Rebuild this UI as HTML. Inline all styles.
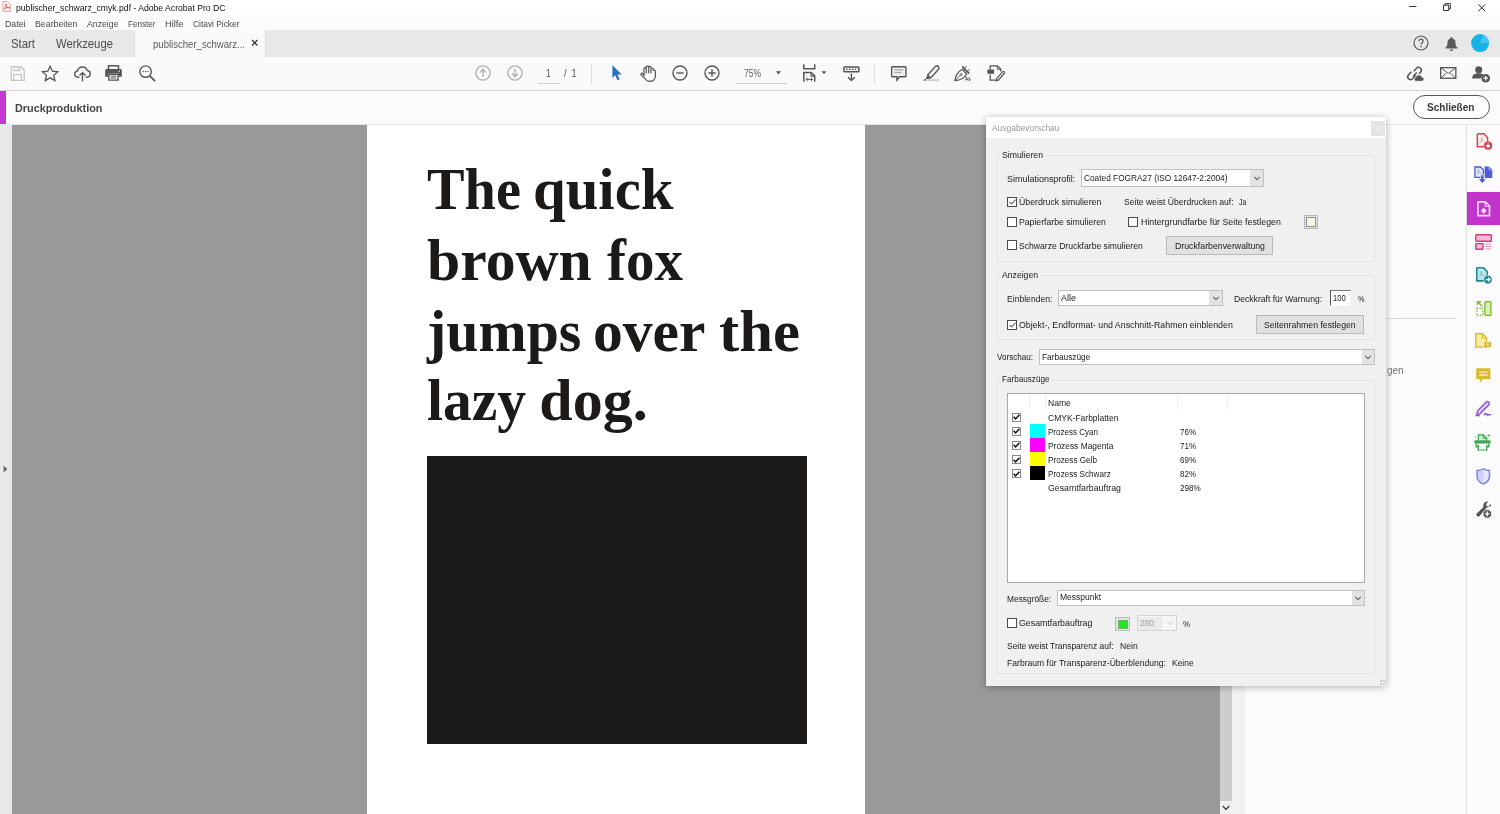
<!DOCTYPE html>
<html>
<head>
<meta charset="utf-8">
<title>publischer_schwarz_cmyk.pdf - Adobe Acrobat Pro DC</title>
<style>
*{box-sizing:border-box;margin:0;padding:0}
html,body{width:1500px;height:814px;overflow:hidden;background:#fff;font-family:"Liberation Sans",sans-serif;}
#root{position:relative;width:1500px;height:814px;overflow:hidden;background:#fff}
.a{position:absolute}
#txt{position:absolute;left:0;top:0;width:1500px;height:814px;will-change:transform}
#hd{position:absolute;left:0;top:0;width:1500px;height:814px;will-change:transform}
.t{position:absolute;white-space:pre;line-height:1;transform-origin:left center;font-family:"Liberation Sans",sans-serif}
svg{position:absolute;overflow:visible}
.hl{position:absolute;font-family:"Liberation Serif",serif;font-weight:bold;color:#1b1a18;white-space:pre;line-height:1;font-size:60px;transform-origin:left top}
.cb{position:absolute;width:10px;height:10px;border:1px solid #4c4c4c;background:#fff}
.lcb{position:absolute;width:9px;height:9px;border:1px solid #8a8a8a;background:#fff}
.sel{position:absolute;background:#fff;border:1px solid #c0c0c0}
.arr{position:absolute;background:#e3e3e3;border-left:0}
.btn{position:absolute;background:#e1e1e1;border:1px solid #bababa}
.grp{position:absolute;border:1px solid #e5e5e5}
.lbl{position:absolute;background:#f0f0f0}
</style>
</head>
<body>
<div id="root">
<!-- chrome -->
<div class="a" style="left:0;top:0;width:1500px;height:15px;background:#ffffff"></div>
<div class="a" style="left:0;top:15px;width:1500px;height:15px;background:#fbfbfb"></div>
<div class="a" style="left:0;top:30px;width:1500px;height:27px;background:#e8e8e8"></div>
<div class="a" style="left:134px;top:30px;width:132px;height:27px;background:#fafafa;border-left:1px solid #dedede;border-right:1px solid #dedede"></div>
<div class="a" style="left:0;top:57px;width:1500px;height:33px;background:#fafafa"></div>
<div class="a" style="left:0;top:90px;width:1500px;height:1px;background:#d2d2d2"></div>
<div class="a" style="left:0;top:91px;width:1500px;height:33px;background:#fbfbfb"></div>
<div class="a" style="left:0;top:91px;width:6px;height:33px;background:#c636d0"></div>
<div class="a" style="left:0;top:124px;width:1500px;height:1px;background:#e4e4e4"></div>
<!-- doc area -->
<div class="a" style="left:0;top:124px;width:1500px;height:1px;background:#e6e6e6"></div>
<div class="a" style="left:0;top:125px;width:12px;height:689px;background:#e9e9e9"></div>
<div class="a" style="left:12px;top:124.500px;width:1208px;height:690px;background:#999999"></div>
<div class="a" style="left:367px;top:125px;width:498px;height:689px;background:#ffffff"></div>
<div class="a" style="left:427px;top:456px;width:379.500px;height:287.500px;background:#1a1917"></div>
<div class="a" style="left:1220px;top:125px;width:12px;height:689px;background:#cdcdcd"></div>
<div class="a" style="left:1220px;top:801px;width:12px;height:13px;background:#f0f0f0"></div>
<div class="a" style="left:1232px;top:125px;width:13px;height:689px;background:#f1f1f1"></div>
<div class="a" style="left:1245px;top:125px;width:221px;height:689px;background:#fbfbfb"></div>
<div class="a" style="left:1466px;top:125px;width:1px;height:689px;background:#dedede"></div>
<div class="a" style="left:1467px;top:125px;width:33px;height:689px;background:#fbfbfb"></div>
<div class="a" style="left:1467px;top:192px;width:33px;height:32.500px;background:#c334cc"></div>
<div class="a" style="left:1386px;top:318px;width:70px;height:1px;background:#dcdcdc"></div>
<!-- left panel arrow -->
<svg style="left:3.400px;top:465px" width="5" height="8" viewBox="0 0 5 8"><path d="M0.5 0.5L4.5 4L0.5 7.5z" fill="#6a6a6a"/></svg>
<!-- scrollbar down arrow -->
<svg style="left:1222px;top:804.500px" width="8" height="6" viewBox="0 0 8 6"><path d="M0.8 1L4 4.4L7.2 1" fill="none" stroke="#444" stroke-width="1.4"/></svg>
<!-- headline -->
<div id="hd">
<div class="hl" id="w1" style="left:427.06px;top:159.400px;transform:scaleX(0.9388)">The</div>
<div class="hl" id="w2" style="left:532.74px;top:159.400px;transform:scaleX(0.9794)">quick</div>
<div class="hl" id="w3" style="left:426.5px;top:230.4px;transform:scaleX(0.9951)">brown</div>
<div class="hl" id="w4" style="left:606.7px;top:230.4px;transform:scaleX(0.95)">fox</div>
<div class="hl" id="w5" style="left:426.7px;top:300.5px;transform:scaleX(0.9642)">jumps</div>
<div class="hl" id="w6" style="left:592.71px;top:300.5px;transform:scaleX(0.9936)">over</div>
<div class="hl" id="w7" style="left:718.99px;top:300.5px;transform:scaleX(1.013)">the</div>
<div class="hl" id="w8" style="left:426.54px;top:370.4px;transform:scaleX(0.9588)">lazy</div>
<div class="hl" id="w9" style="left:539.3px;top:370.4px;transform:scaleX(1.0)">dog.</div>
</div>
<!-- toolbar small bits -->
<div class="a" style="left:538px;top:83px;width:22px;height:1px;background:#cfcfcf"></div>
<div class="a" style="left:591px;top:64px;width:1px;height:20px;background:#dedede"></div>
<div class="a" style="left:736px;top:83px;width:51px;height:1px;background:#cfcfcf"></div>
<div class="a" style="left:874px;top:64px;width:1px;height:20px;background:#dedede"></div>
<div class="a" style="left:1413px;top:95px;width:77px;height:24px;border:1.300px solid #585858;border-radius:12px;background:#fdfdfd"></div>
<!-- DIALOG -->
<div class="a" style="left:986px;top:117px;width:400px;height:569px;background:#f0f0f0;box-shadow:0 1px 7px rgba(0,0,0,.30)"></div>
<div class="a" style="left:986px;top:117px;width:400px;height:21px;background:#ffffff"></div>
<div class="a" style="left:1371px;top:121px;width:14px;height:15px;background:#e5e5e5"></div>
<div class="t" style="left:1375.5px;top:124px;font-size:9px;color:#f4f4f4">×</div>
<!-- groups -->
<div class="grp" style="left:997px;top:155px;width:378px;height:107px"></div>
<div class="lbl" style="left:1000px;top:149px;width:45px;height:11px"></div>
<div class="grp" style="left:997px;top:275px;width:378px;height:65px"></div>
<div class="lbl" style="left:1000px;top:269px;width:40px;height:11px"></div>
<div class="grp" style="left:997px;top:380px;width:378px;height:294px"></div>
<div class="lbl" style="left:1000px;top:374px;width:52px;height:11px"></div>
<!-- row 1 select -->
<div class="sel" style="left:1081px;top:169px;width:183px;height:18px"></div>
<div class="arr" style="left:1250px;top:170px;width:13px;height:16px"></div>
<svg style="left:1253px;top:176px" width="8" height="5" viewBox="0 0 8 5"><path d="M1.200 0.900L4 3.700L6.800 0.900" fill="none" stroke="#6a6a6a" stroke-width="1.200"/></svg>
<!-- checkboxes -->
<div class="cb" style="left:1007px;top:197px"></div>
<svg style="left:1008.5px;top:199px" width="7" height="6" viewBox="0 0 7 6"><path d="M0.5 3L2.6 5.1L6.6 0.6" fill="none" stroke="#222" stroke-width="1"/></svg>
<div class="cb" style="left:1007px;top:217px"></div>
<div class="cb" style="left:1128px;top:217px"></div>
<div class="cb" style="left:1007px;top:240px"></div>
<div class="cb" style="left:1007px;top:319.5px"></div>
<svg style="left:1008.5px;top:321.5px" width="7" height="6" viewBox="0 0 7 6"><path d="M0.5 3L2.6 5.1L6.6 0.6" fill="none" stroke="#222" stroke-width="1"/></svg>
<div class="cb" style="left:1007px;top:618px"></div>
<!-- colour swatch -->
<div class="a" style="left:1304px;top:215px;width:14px;height:14px;background:#e3e3e3;border:1px solid #b9b9b9"></div>
<div class="a" style="left:1306px;top:217px;width:10px;height:10px;background:#f6f9e3;border:1px solid #8f8f8f"></div>
<!-- buttons -->
<div class="btn" style="left:1166px;top:236px;width:107px;height:19px"></div>
<div class="btn" style="left:1256px;top:315px;width:108px;height:19px"></div>
<!-- Einblenden select -->
<div class="sel" style="left:1058px;top:289.5px;width:165px;height:16.5px"></div>
<div class="arr" style="left:1209px;top:290.5px;width:13px;height:14.5px"></div>
<svg style="left:1212px;top:296px" width="8" height="5" viewBox="0 0 8 5"><path d="M1.200 0.900L4 3.700L6.800 0.900" fill="none" stroke="#6a6a6a" stroke-width="1.200"/></svg>
<!-- 100 input -->
<div class="a" style="left:1330px;top:290px;width:21px;height:16px;background:#fff;border-left:1px solid #555;border-top:1px solid #777;border-right:1px solid #f8f8f8;border-bottom:1px solid #f8f8f8"></div>
<!-- Vorschau select -->
<div class="sel" style="left:1039px;top:348.5px;width:336px;height:16.5px"></div>
<div class="arr" style="left:1361.5px;top:349.5px;width:12.5px;height:14.5px"></div>
<svg style="left:1364px;top:355px" width="8" height="5" viewBox="0 0 8 5"><path d="M1.200 0.900L4 3.700L6.800 0.900" fill="none" stroke="#6a6a6a" stroke-width="1.200"/></svg>
<!-- list box -->
<div class="a" style="left:1007px;top:393px;width:358px;height:190px;background:#fff;border:1px solid #a9a9a9"></div>
<div class="a" style="left:1029px;top:394px;width:1px;height:16px;background:#ededed"></div>
<div class="a" style="left:1044.5px;top:394px;width:1px;height:16px;background:#ededed"></div>
<div class="a" style="left:1176.5px;top:394px;width:1px;height:16px;background:#ededed"></div>
<div class="a" style="left:1227px;top:394px;width:1px;height:16px;background:#ededed"></div>
<!-- swatches -->
<div class="a" style="left:1030px;top:424px;width:14.5px;height:14px;background:#00ffff"></div>
<div class="a" style="left:1030px;top:437.7px;width:14.5px;height:14px;background:#ff00ff"></div>
<div class="a" style="left:1030px;top:451.7px;width:14.5px;height:14px;background:#ffff00"></div>
<div class="a" style="left:1030px;top:465.7px;width:14.5px;height:14.2px;background:#000000"></div>
<div class="lcb" style="left:1011.5px;top:412.7px"></div>
<svg style="left:1012.6px;top:414.3px" width="7" height="6" viewBox="0 0 7 6"><path d="M0.6 2.8L2.6 4.9L6.4 0.7" fill="none" stroke="#111" stroke-width="1.5"/></svg>
<div class="lcb" style="left:1011.5px;top:426.8px"></div>
<svg style="left:1012.6px;top:428.4px" width="7" height="6" viewBox="0 0 7 6"><path d="M0.6 2.8L2.6 4.9L6.4 0.7" fill="none" stroke="#111" stroke-width="1.5"/></svg>
<div class="lcb" style="left:1011.5px;top:440.8px"></div>
<svg style="left:1012.6px;top:442.4px" width="7" height="6" viewBox="0 0 7 6"><path d="M0.6 2.8L2.6 4.9L6.4 0.7" fill="none" stroke="#111" stroke-width="1.5"/></svg>
<div class="lcb" style="left:1011.5px;top:454.9px"></div>
<svg style="left:1012.6px;top:456.5px" width="7" height="6" viewBox="0 0 7 6"><path d="M0.6 2.8L2.6 4.9L6.4 0.7" fill="none" stroke="#111" stroke-width="1.5"/></svg>
<div class="lcb" style="left:1011.5px;top:469.0px"></div>
<svg style="left:1012.6px;top:470.6px" width="7" height="6" viewBox="0 0 7 6"><path d="M0.6 2.8L2.6 4.9L6.4 0.7" fill="none" stroke="#111" stroke-width="1.5"/></svg>
<!-- Messgroesse select -->
<div class="sel" style="left:1057px;top:590px;width:308px;height:16px"></div>
<div class="arr" style="left:1351.500px;top:591px;width:12.500px;height:14px"></div>
<svg style="left:1354px;top:596px" width="8" height="5" viewBox="0 0 8 5"><path d="M1.200 0.900L4 3.700L6.800 0.900" fill="none" stroke="#6a6a6a" stroke-width="1.200"/></svg>
<!-- green swatch -->
<div class="a" style="left:1115px;top:617px;width:15px;height:14px;background:#e3e3e3;border:1px solid #bdbdbd"></div>
<div class="a" style="left:1117.500px;top:619.500px;width:10px;height:9px;background:#1fe61f;border:1px solid #6fb56f"></div>
<!-- 280 combo (disabled) -->
<div class="a" style="left:1136.5px;top:615px;width:40px;height:16px;background:#f6f6f6;border:1px solid #d4d4d4"></div>
<div class="a" style="left:1138px;top:616.5px;width:24px;height:13px;background:#eaeaea"></div>
<svg style="left:1166.5px;top:621px" width="7" height="5" viewBox="0 0 7 5"><path d="M0.6 0.7L3.5 3.7L6.4 0.7" fill="none" stroke="#c4c4c4" stroke-width="1"/></svg>
<!-- resize grip -->
<div class="a" style="left:1380px;top:680px;width:2px;height:2px;background:#c9c9c9"></div>
<div class="a" style="left:1383px;top:680px;width:2px;height:2px;background:#c9c9c9"></div>
<div class="a" style="left:1380px;top:683px;width:2px;height:2px;background:#c9c9c9"></div>
<div class="a" style="left:1383px;top:683px;width:2px;height:2px;background:#c9c9c9"></div>
<!-- ICONS -->
<!-- pdf icon in title -->
<svg style="left:2px;top:1.200px" width="9" height="11" viewBox="0 0 9 11"><path d="M0.900 0.500h4.800l2.600 2.600v7.200h-7.400z" fill="#fdf3f3" stroke="#e6a3a1" stroke-width="1"/><path d="M1.900 7.700c1.500-.8 2.500-2.700 2.500-4.400c0-.8-.8-.8-.8 0c0 1.600 1.500 3.400 3.400 3.700c.7.100.7-.6 0-.6c-1.600 0-3.500.4-5.100 1.300z" fill="none" stroke="#d84b46" stroke-width=".75"/></svg>
<!-- window controls -->
<svg style="left:1409px;top:6px" width="8" height="1.4" viewBox="0 0 8 1.4"><rect width="7.4" height="1" fill="#333"/></svg>
<svg style="left:1443px;top:3px" width="8" height="8" viewBox="0 0 8 8"><path d="M0.5 2.2h5.2v5.300h-5.200z" fill="none" stroke="#333" stroke-width="1"/><path d="M2 2V.6h5.300v5.400H5.900" fill="none" stroke="#333" stroke-width="1"/></svg>
<svg style="left:1478px;top:3.5px" width="8" height="8" viewBox="0 0 8 8"><path d="M0.4 0.4L7.2 7.200M7.200 .4L.4 7.200" stroke="#222" stroke-width="1"/></svg>
<!-- tab bar right: help, bell, avatar -->
<svg style="left:1412.500px;top:35.200px" width="16" height="16" viewBox="0 0 16 16"><circle cx="8" cy="8" r="7" fill="none" stroke="#5a5a5a" stroke-width="1.200"/><path d="M5.900 6.300c0-1.300.9-2.100 2.100-2.100s2.100.8 2.100 1.900c0 1.500-2.000 1.600-2.000 3.300" fill="none" stroke="#5a5a5a" stroke-width="1.300"/><circle cx="8.100" cy="11.500" r=".85" fill="#5a5a5a"/></svg>
<svg style="left:1444.500px;top:36.500px" width="13" height="15" viewBox="0 0 13 15"><path d="M6.500 0.300c.8 0 1.200.5 1.200 1.200c2 .6 2.800 2.200 2.800 4.300c0 2.500.600 3.800 2 4.800v.9h-12v-.9c1.400-1 2-2.300 2-4.800c0-2.100.8-3.700 2.800-4.300c0-.7.400-1.200 1.200-1.200z" fill="#5a5a5a"/><path d="M4.900 12.400h3.200c0 1-.7 1.700-1.600 1.700s-1.600-.7-1.600-1.700z" fill="#5a5a5a"/></svg>
<svg style="left:1471.400px;top:34.400px" width="18.200" height="18.200" viewBox="0 0 18.200 18.200"><circle cx="9.100" cy="9.100" r="9" fill="#14b4e6"/><path d="M9.100 9.100L12.800 0.900A9 9 0 0 1 18.100 9.100z" fill="#4cc6ec"/></svg>
<!-- LEFT TOOLBAR -->
<!-- save (disabled) -->
<svg style="left:10px;top:66px" width="15" height="15" viewBox="0 0 15 15"><path d="M1.200 0.700h9.600l3.400 3.400v10.200h-13z" fill="none" stroke="#c6c6c6" stroke-width="1.300"/><path d="M4 .9v3.800h5.800v-3.800M3.600 14.100v-5.400h7.800v5.400" fill="none" stroke="#c6c6c6" stroke-width="1.200"/><path d="M7.800 1.500v2.200" stroke="#c6c6c6" stroke-width="1.200"/></svg>
<!-- star -->
<svg style="left:40.800px;top:65.200px" width="18.200" height="16.200" viewBox="0 0 19 17"><path d="M9.500 1.300l2.400 5.200l5.700 .6l-4.300 3.800l1.200 5.500l-5-2.900l-5 2.900l1.200-5.500l-4.300-3.800l5.700-.6z" fill="none" stroke="#555" stroke-width="1.350" stroke-linejoin="miter"/></svg>
<!-- cloud upload -->
<svg style="left:73.500px;top:65.500px" width="17" height="16" viewBox="0 0 17 16"><path d="M5.300 11.200h-1.300c-1.900 0-3.300-1.400-3.300-3.100c0-1.600 1.200-2.900 2.800-3.100c.5-2.300 2.400-4 4.900-4c2.300 0 4.200 1.400 4.800 3.500c1.800.2 3.100 1.600 3.100 3.300c0 1.900-1.500 3.400-3.400 3.400h-1.200" fill="none" stroke="#555" stroke-width="1.350"/><path d="M8.500 15.300v-8.300M5.500 9.600l3-3l3 3" fill="none" stroke="#555" stroke-width="1.350"/></svg>
<!-- printer -->
<svg style="left:105.400px;top:65px" width="17" height="16" viewBox="0 0 17 16"><path d="M3.500 4.200v-3.400h10v3.400" fill="none" stroke="#555" stroke-width="1.500"/><path d="M1.800 4h13.400c.9 0 1.600.7 1.600 1.600v6.200h-3v-3.200h-10.600v3.200h-3v-6.200c0-.9.700-1.600 1.600-1.600z" fill="#555"/><path d="M3.900 9.200h9.200v5.900h-9.200z" fill="none" stroke="#555" stroke-width="1.400"/><path d="M5.800 11.200h5.400M5.800 13h5.400" stroke="#555" stroke-width="1"/><circle cx="14.200" cy="6.200" r=".7" fill="#fafafa"/></svg>
<!-- search -->
<svg style="left:138.500px;top:65px" width="17" height="17" viewBox="0 0 17 17"><circle cx="6.600" cy="6.600" r="5.700" fill="none" stroke="#555" stroke-width="1.400"/><path d="M10.800 10.800l5.300 5.300" stroke="#555" stroke-width="1.800"/><circle cx="4.200" cy="6.600" r=".75" fill="#555"/><circle cx="6.600" cy="6.600" r=".75" fill="#555"/><circle cx="9" cy="6.600" r=".75" fill="#555"/></svg>
<!-- CENTER TOOLBAR -->
<svg style="left:474.500px;top:64.7px" width="16" height="16" viewBox="0 0 16 16"><circle cx="8" cy="8" r="7.100" fill="none" stroke="#b0b0b0" stroke-width="1.400"/><path d="M8 12v-7.500M4.900 7.400l3.100-3.100l3.100 3.100" fill="none" stroke="#b0b0b0" stroke-width="1.400"/></svg>
<svg style="left:506.700px;top:64.7px" width="16" height="16" viewBox="0 0 16 16"><circle cx="8" cy="8" r="7.100" fill="none" stroke="#b0b0b0" stroke-width="1.400"/><path d="M8 4v7.500M4.900 8.600l3.100 3.100l3.100-3.100" fill="none" stroke="#b0b0b0" stroke-width="1.400"/></svg>
<!-- pointer -->
<svg style="left:611.500px;top:64.7px" width="10" height="16" viewBox="0 0 10 16"><path d="M0.400 0.300l9.300 9.100h-4.300l2.300 4.900l-2.200 1l-2.300-5l-2.800 2.700z" fill="#2a6fc7"/></svg>
<!-- hand -->
<svg style="left:640px;top:64.600px" width="16" height="17" viewBox="0 0 16 17"><path d="M4 10.600V3.700c0-1.500 2.300-1.500 2.300 0V8M6.300 7.800V2c0-1.500 2.400-1.500 2.400 0V7.800M8.700 7.800V2.400c0-1.500 2.300-1.500 2.300 0V8M11 8V4.100c0-1.500 2.300-1.500 2.300 0v1.200c1.200-.5 2.100.2 2.100 1.400V10.800c0 3.400-2.200 5.500-5.600 5.500c-2.300 0-3.700-.9-4.900-2.800L1 9.900c-.7-1.200.9-2.300 1.800-1.200L4 10.600" fill="none" stroke="#555" stroke-width="1.200" stroke-linejoin="round" stroke-linecap="round"/></svg>
<!-- minus / plus -->
<svg style="left:672px;top:64.7px" width="16" height="16" viewBox="0 0 16 16"><circle cx="8" cy="8" r="7" fill="none" stroke="#555" stroke-width="1.350"/><path d="M4.300 8h7.400" stroke="#555" stroke-width="1.400"/></svg>
<svg style="left:704.200px;top:64.7px" width="16" height="16" viewBox="0 0 16 16"><circle cx="8" cy="8" r="7" fill="none" stroke="#555" stroke-width="1.350"/><path d="M4.300 8h7.400M8 4.300v7.400" stroke="#555" stroke-width="1.400"/></svg>
<!-- zoom dropdown arrow -->
<svg style="left:776px;top:71.2px" width="5" height="4" viewBox="0 0 5 4"><path d="M0 0.300h5l-2.500 3.300z" fill="#555"/></svg>
<!-- fit page -->
<svg style="left:803px;top:63.800px" width="24" height="18" viewBox="0 0 24 18"><path d="M0.800 0.300v4.500h10.900v-4.500" fill="none" stroke="#555" stroke-width="1.500"/><path d="M0.800 17.800v-9.300h7.400l3.500 3.400v5.900" fill="none" stroke="#555" stroke-width="1.500"/><path d="M8 8.700v3.400h3.500" fill="none" stroke="#555" stroke-width="1.100"/><path d="M3 15.400h6.500M4.600 13.800l-1.700 1.600l1.700 1.600M7.900 13.800l1.700 1.600l-1.700 1.600" fill="none" stroke="#555" stroke-width="1"/><path d="M18.600 7.200h4.800l-2.400 3z" fill="#555"/></svg>
<!-- scroll/keyboard icon -->
<svg style="left:843px;top:66px" width="17" height="16" viewBox="0 0 17 16"><rect x="0.900" y="0.900" width="15" height="4.800" rx=".8" fill="#f2f2f2" stroke="#555" stroke-width="1.500"/><rect x="3" y="2.700" width="1.500" height="1.300" fill="#555"/><rect x="5.900" y="2.700" width="1.500" height="1.300" fill="#555"/><rect x="8.800" y="2.700" width="1.500" height="1.300" fill="#555"/><rect x="11.700" y="2.700" width="1.500" height="1.300" fill="#555"/><path d="M8.400 7.600v6.700M5 11.200l3.400 3.400l3.400-3.400" fill="none" stroke="#555" stroke-width="1.400"/></svg>
<!-- comment -->
<svg style="left:891px;top:65.800px" width="16" height="15" viewBox="0 0 16 15"><path d="M1.500 0.700h12.600c.5 0 .9.400 .9.900v8.200c0 .5-.4.900-.9.900h-5.500l-2.700 3.300v-3.300h-4.400c-.5 0-.9-.4-.9-.900v-8.200c0-.5.400-.9.900-.9z" fill="#ececec" stroke="#555" stroke-width="1.350"/><path d="M3.500 3.800h8.600M3.500 6.400h6.800" stroke="#9a9a9a" stroke-width="1"/></svg>
<!-- highlighter -->
<svg style="left:922px;top:65px" width="18" height="17" viewBox="0 0 18 17"><path d="M5.600 10l7.600-8.400c.9-1 2.200-1 3.100-.2s1 2.100.1 3.100l-7.600 8.400z" fill="#f0f0f0" stroke="#555" stroke-width="1.300"/><path d="M5.300 10.300l3.200 2.900l-2.400 1.100l-2.400-.6z" fill="#555"/><path d="M0.600 15.600l2.800-1.800l1.600 1.600z" fill="#555"/><rect x="5.500" y="14.200" width="11.800" height="2" fill="#d0d0d0"/></svg>
<!-- sign pen -->
<svg style="left:954px;top:64.800px" width="18" height="17" viewBox="0 0 18 17"><path d="M1 15.600C1.400 11 3.600 7 8.400 4.300L12.700 9.200C10.200 13.600 6 15.200 1 15.600z" fill="none" stroke="#555" stroke-width="1.300" stroke-linejoin="round"/><path d="M1.300 15.300l5-5" stroke="#555" stroke-width="1"/><circle cx="7.100" cy="9.600" r="1.100" fill="none" stroke="#555" stroke-width=".9"/><path d="M8.200 1.400l7 7.200" stroke="#555" stroke-width="1.600"/><path d="M10.300 3.600l2.300-2.600M13 6.500l2.500-2.200" stroke="#555" stroke-width="1"/><path d="M11.300 15.500l1.300-3.300l1.300 3.300M11.800 14.400h1.600M15 12.200v3.300c1.800.2 1.800-2.200 0-2" fill="none" stroke="#555" stroke-width=".8"/></svg>
<!-- redact / fill-sign -->
<svg style="left:986.500px;top:65px" width="18" height="17" viewBox="0 0 18 17"><path d="M3.200 4.300v-3.400h7.300l3.200 3.100v2.600" fill="none" stroke="#555" stroke-width="1.300"/><path d="M10.200 1v3.300h3.300" fill="none" stroke="#555" stroke-width="1"/><rect x="0.400" y="4.500" width="6.700" height="4.300" fill="#555"/><path d="M3.200 9.500v5.700h5.600" fill="none" stroke="#555" stroke-width="1.300"/><path d="M9.800 13.300l5.600-6.400c.5-.5 1.200-.5 1.700-.1s.5 1.200.1 1.700l-5.600 6.400l-2.400.9z" fill="#ececec" stroke="#555" stroke-width="1.200"/></svg>
<!-- RIGHT TOOLBAR -->
<!-- link+cloud -->
<svg style="left:1407px;top:65.500px" width="19" height="16" viewBox="0 0 19 16"><path d="M6.700 5.200l2.500-2.700c1.200-1.300 3-1.400 4.200-.3s1.200 2.900.1 4.100l-1.400 1.500" fill="none" stroke="#555" stroke-width="1.500"/><path d="M9.800 6.600l-3.900 4.200" stroke="#555" stroke-width="1.500"/><path d="M8.900 9.400l-3 3.200c-1.200 1.300-3 1.400-4.200.3s-1.200-2.900-.1-4.100l2.800-3" fill="none" stroke="#555" stroke-width="1.500"/><path d="M9.300 15.300c-1.300 0-2.200-.9-2.200-2c0-1 .7-1.800 1.700-2c.3-1.500 1.600-2.500 3.100-2.500c1.400 0 2.600.9 3 2.200c1.200.1 2.100 1 2.100 2.100c0 1.200-1 2.200-2.200 2.200z" fill="#555" stroke="#fafafa" stroke-width=".8"/></svg>
<!-- mail -->
<svg style="left:1440.400px;top:67px" width="17" height="12" viewBox="0 0 17 12"><rect x="0.650" y="0.650" width="15.200" height="10.600" fill="none" stroke="#555" stroke-width="1.300"/><path d="M0.900 0.900l7.400 5.500l7.400-5.500M0.900 11l5.500-5M15.600 11l-5.500-5" fill="none" stroke="#555" stroke-width="1"/></svg>
<!-- person + -->
<svg style="left:1471.500px;top:65.500px" width="19" height="17" viewBox="0 0 19 17"><circle cx="6.700" cy="3.700" r="3.500" fill="#555"/><path d="M0.200 12.400c0-3.400 2.400-5.200 6.500-5.200c2.300 0 4 .6 5.100 1.700c-1.700 .6-2.800 2-3.100 3.500z" fill="#555"/><circle cx="13.700" cy="12.200" r="4.300" fill="#555"/><path d="M11.400 12.200h4.600M13.700 9.900v4.600" stroke="#fafafa" stroke-width="1.300"/></svg>
<!-- RIGHT RAIL ICONS -->
<!-- 1 create pdf -->
<svg style="left:1475.500px;top:133px" width="17" height="17" viewBox="0 0 17 17"><path d="M1.300 0.800h6.600l3.700 3.700v4.300M8.300 13.800h-7v-13" fill="#fbe9ea" stroke="#d9414a" stroke-width="1.400"/><path d="M3.400 10.300c1.400-.9 2.600-3 2.800-5.200c0-.8-.8-.8-.8 0c.2 1.900 1.500 3.500 3 4" fill="none" stroke="#e07f85" stroke-width=".8"/><circle cx="12.100" cy="12.700" r="4.100" fill="#d9414a"/><path d="M9.900 12.700h4.400M12.100 10.500v4.400" stroke="#fff" stroke-width="1.400"/></svg>
<!-- 2 export pdf -->
<svg style="left:1474px;top:165.500px" width="19" height="18" viewBox="0 0 19 18"><path d="M0.900 1h5.600l2.800 2.800v7.600h-8.400z" fill="#e4e6fa" stroke="#4f5bd5" stroke-width="1.300"/><path d="M2.600 8.300c1.200-.7 2.100-2.300 2.300-4c0-.7-.7-.7-.7 0c.2 1.500 1.200 2.800 2.500 3.200" fill="none" stroke="#8a92e3" stroke-width=".8"/><path d="M10.600 0.400h4.400l3.300 3.300v8.200h-7.700z" fill="#4f5bd5"/><path d="M15 0.400v3.300h3.300" fill="none" stroke="#c8ccf4" stroke-width=".8"/><path d="M6.700 8.800h3.200v4.200h2.300l-3.900 4.400l-3.900-4.400h2.300z" fill="#4f5bd5" stroke="#fbfbfb" stroke-width=".7"/></svg>
<!-- 3 print production (active) -->
<svg style="left:1476.800px;top:200.800px" width="14" height="16" viewBox="0 0 14 16"><path d="M0.900 0.900h7.400l4.200 4.200v9.600h-11.600z" fill="none" stroke="#fbdcfd" stroke-width="1.700" stroke-linejoin="round"/><path d="M8.200 1.200v4h4" fill="none" stroke="#fbdcfd" stroke-width="1.100"/><path d="M6.700 6.400l2.900 3.300l-2.900 3.300l-2.900-3.300z" fill="#fbdcfd"/></svg>
<!-- 4 rich media / layout -->
<svg style="left:1474.500px;top:233.500px" width="17" height="16" viewBox="0 0 17 16"><rect x="0.800" y="0.800" width="15.600" height="6.400" rx=".8" fill="#ffb9d9" stroke="#d03a80" stroke-width="1.400"/><rect x="0.800" y="9.600" width="7.200" height="5.700" rx=".6" fill="#ffb9d9" stroke="#d03a80" stroke-width="1.400"/><path d="M10.400 10.100h6M10.400 12.500h6M10.400 14.900h6" stroke="#e58ab4" stroke-width="1"/></svg>
<!-- 5 send pdf -->
<svg style="left:1476px;top:267px" width="17" height="17" viewBox="0 0 17 17"><path d="M0.900 0.900h6.600l3.800 3.800v4.300M7.600 13.800h-6.700v-12.900" fill="#b9e6ec" stroke="#22838d" stroke-width="1.400"/><path d="M1 1h6.400l3.800 3.800v9h-10.200z" fill="#b9e6ec" stroke="none"/><path d="M0.900 0.900h6.600l3.800 3.800v9h-10.400z" fill="none" stroke="#22838d" stroke-width="1.400"/><path d="M3 10.300c1.400-.9 2.600-3 2.800-5.200c0-.8-.8-.8-.8 0c.2 1.900 1.500 3.500 3 4" fill="none" stroke="#6fb3ba" stroke-width=".8"/><circle cx="11.900" cy="12.600" r="4.300" fill="#1b8792" stroke="#fbfbfb" stroke-width=".6"/><path d="M9.600 12.600h4M12 10.600l2 2l-2 2" fill="none" stroke="#fff" stroke-width="1.300"/></svg>
<!-- 6 organize / compare -->
<svg style="left:1475.500px;top:301px" width="16" height="16" viewBox="0 0 16 16"><rect x="8.900" y="0.800" width="6" height="13.600" rx=".6" fill="#d8f2b6" stroke="#86ba38" stroke-width="1.400"/><path d="M0.800 7.200h5.800v7.200h-5.800z" fill="none" stroke="#86ba38" stroke-width="1.300" stroke-dasharray="1.500 1.300"/><path d="M6.400 5.300l-4.800-4.300M1.300 4.300v-3.500h3.700" fill="none" stroke="#86ba38" stroke-width="1.400"/></svg>
<!-- 7 doc + comment -->
<svg style="left:1474.800px;top:333px" width="17" height="17" viewBox="0 0 17 17"><path d="M0.800 0.800h6.800l4 4v9.300h-10.800z" fill="#f6eba6" stroke="#d8bf22" stroke-width="1.400"/><path d="M7.400 1v4h4" fill="none" stroke="#d8bf22" stroke-width="1"/><path d="M8.900 8.700h7.400v5.700h-4.300l-1.700 1.800v-1.800h-1.400z" fill="#d6ba20" stroke="#fbfbfb" stroke-width=".5"/><rect x="11.300" y="10.400" width="2.600" height="2" fill="#f6eba6"/></svg>
<!-- 8 comment -->
<svg style="left:1475.800px;top:368.200px" width="15" height="15" viewBox="0 0 15 15"><path d="M1.200 0.200h12.200c.6 0 1 .4 1 1v8.900c0 .6-.4 1-1 1h-6.300l-3 3.600v-3.600h-2.900c-.6 0-1-.4-1-1v-8.900c0-.6.4-1 1-1z" fill="#d9ba2b"/><path d="M3.200 4.100h8.400M3.200 7h8.400" stroke="#fbf0bd" stroke-width="1.300"/></svg>
<!-- 9 fill & sign pen -->
<svg style="left:1474.500px;top:401px" width="18" height="16" viewBox="0 0 18 16"><path d="M1.600 13.700l1.200-4.200l8.200-8.200c.8-.8 2-.8 2.800 0s.8 2 0 2.800l-8.200 8.200z" fill="#e0cbf7" stroke="#8d55d2" stroke-width="1.400" stroke-linejoin="round"/><path d="M0.600 14.600h4.200" stroke="#8d55d2" stroke-width="1.400"/><path d="M9.200 14.400c.6-2.500 1.600-2.600 1.800-.4c.6-1.500 1.400-1.500 1.700 0c.5-.9 1.200-.9 1.500 0c.5-.4 1.200-.5 1.900-.4" fill="none" stroke="#8d55d2" stroke-width="1.300"/></svg>
<!-- 10 print production green -->
<svg style="left:1474.300px;top:434px" width="17" height="17" viewBox="0 0 17 17"><path d="M4.400 6.400v-5.500h4.900l3.300 3.300v2.200" fill="#d5f3db" stroke="#3fa856" stroke-width="1.400"/><path d="M9.100 1.100v3.300h3.300" fill="none" stroke="#3fa856" stroke-width="1"/><rect x="0.400" y="6.300" width="16.200" height="3.300" rx=".7" fill="#3fa856"/><path d="M2.300 9.500v3.300h2M14.700 9.500v3.300h-2" fill="none" stroke="#3fa856" stroke-width="1.500"/><path d="M4.300 11v5.100h8.400v-5.100" fill="none" stroke="#3fa856" stroke-width="1.400"/><path d="M5.600 16.100h5.800" stroke="#d5f3db" stroke-width="1.400" stroke-dasharray="1 1.400"/><path d="M14.900 0.200v2.600M13.600 1.500h2.600" stroke="#3fa856" stroke-width=".8"/><path d="M1.500 2.300v1.600M.7 3.100h1.600" stroke="#7fca90" stroke-width=".6"/></svg>
<!-- 11 shield -->
<svg style="left:1476px;top:467.700px" width="15" height="17" viewBox="0 0 15 17"><path d="M7.300 0.900c1.800 1.200 3.800 1.700 6.200 1.700v5.400c0 3.900-2.300 6.500-6.200 7.900c-3.900-1.400-6.200-4-6.200-7.900v-5.400c2.400 0 4.400-.5 6.200-1.700z" fill="#e4e6fb" stroke="#7a80d9" stroke-width="1.500" stroke-linejoin="round"/><path d="M7.300 1.600v13.800c-3.400-1.300-5.500-3.700-5.500-7.300v-4.900c2.100 0 3.900-.5 5.500-1.600z" fill="#cfd2f6"/></svg>
<!-- 12 wrench + -->
<svg style="left:1475.200px;top:501px" width="17" height="17" viewBox="0 0 17 17"><path d="M1.200 13.100l7.300-7.100c-.6-1.800-.1-3.500 1.200-4.600c1.100-.9 2.500-1.200 3.800-.8l-2.600 2.700l.5 2l2 .5l2.200-2.300" fill="none" stroke="#555" stroke-width="0"/><path d="M2 14.900c-.8-.8-.8-1.900 0-2.600l6.500-6.300c-.5-1.600-.1-3.300 1.200-4.500c1.100-1 2.600-1.300 3.900-.9l-2.500 2.500l.4 1.900l1.900.4l2.500-2.500c.2.700.2 1.600 0 2.200l-4 1.500l-7.300 8.300c-.7.800-1.800.8-2.600 0z" fill="#555"/><circle cx="12.300" cy="12.900" r="4.300" fill="#555" stroke="#fbfbfb" stroke-width=".7"/><path d="M10 12.900h4.600M12.300 10.600v4.600" stroke="#fbfbfb" stroke-width="1.400"/></svg>

<!-- texts -->
<div id="txt">
<div class="t" style="left:15.5px;top:3.7px;font-size:9.0px;color:#111;transform:scaleX(0.9583)">publischer_schwarz_cmyk.pdf - Adobe Acrobat Pro DC</div>
<div class="t" style="left:4.5px;top:20.0px;font-size:8.8px;color:#4a4a4a;transform:scaleX(0.9977)">Datei</div>
<div class="t" style="left:34.5px;top:20.0px;font-size:8.8px;color:#4a4a4a;transform:scaleX(0.9985)">Bearbeiten</div>
<div class="t" style="left:86.5px;top:20.0px;font-size:8.8px;color:#4a4a4a;transform:scaleX(0.9907)">Anzeige</div>
<div class="t" style="left:127.5px;top:20.0px;font-size:8.8px;color:#4a4a4a;transform:scaleX(0.9219)">Fenster</div>
<div class="t" style="left:164.5px;top:20.0px;font-size:8.8px;color:#4a4a4a;transform:scaleX(1.0506)">Hilfe</div>
<div class="t" style="left:192.5px;top:20.0px;font-size:8.8px;color:#4a4a4a;transform:scaleX(0.9511)">Citavi Picker</div>
<div class="t" style="left:10.5px;top:37.5px;font-size:12px;color:#4b4b4b;transform:scaleX(0.9470)">Start</div>
<div class="t" style="left:55.5px;top:37.5px;font-size:12px;color:#4b4b4b;transform:scaleX(0.9424)">Werkzeuge</div>
<div class="t" style="left:153.0px;top:38.7px;font-size:10.6px;color:#5a5a5a;transform:scaleX(0.9031)">publischer_schwarz...</div>
<div class="t" style="left:251.3px;top:37.4px;font-size:12.5px;color:#3c3c3c;transform:scaleX(1.0120);font-weight:bold">×</div>
<div class="t" style="left:14.6px;top:102.6px;font-size:11.2px;color:#454545;transform:scaleX(0.9698);font-weight:bold">Druckproduktion</div>
<div class="t" style="left:546.3px;top:68.8px;font-size:10.3px;color:#505050;transform:scaleX(0.8196)">1</div>
<div class="t" style="left:564.0px;top:68.8px;font-size:10.3px;color:#505050;transform:scaleX(0.8803)">/  1</div>
<div class="t" style="left:743.5px;top:68.7px;font-size:10.2px;color:#606060;transform:scaleX(0.8288)">75%</div>
<div class="t" style="left:1427.0px;top:102.0px;font-size:11.2px;color:#3a3a3a;transform:scaleX(0.8986);font-weight:bold">Schließen</div>
<div class="t" style="left:1386.5px;top:365.5px;font-size:10.2px;color:#707070;transform:scaleX(0.9706)">gen</div>
<div class="t" style="left:991.5px;top:123.4px;font-size:9.4px;color:#9a9a9a;transform:scaleX(0.8993)">Ausgabevorschau</div>
<div class="t" style="left:1002.0px;top:151.3px;font-size:9.2px;color:#1a1a1a;transform:scaleX(0.9446)">Simulieren</div>
<div class="t" style="left:1007.0px;top:175.1px;font-size:9.2px;color:#1a1a1a;transform:scaleX(0.9762)">Simulationsprofil:</div>
<div class="t" style="left:1084.0px;top:173.9px;font-size:9.2px;color:#1a1a1a;transform:scaleX(0.9035)">Coated FOGRA27 (ISO 12647-2:2004)</div>
<div class="t" style="left:1018.7px;top:197.9px;font-size:9.2px;color:#1a1a1a;transform:scaleX(0.9480)">Überdruck simulieren</div>
<div class="t" style="left:1123.8px;top:197.7px;font-size:9.2px;color:#1a1a1a;transform:scaleX(0.9330)">Seite weist Überdrucken auf:</div>
<div class="t" style="left:1239.3px;top:197.7px;font-size:9.2px;color:#1a1a1a;transform:scaleX(0.7408)">Ja</div>
<div class="t" style="left:1018.7px;top:217.7px;font-size:9.2px;color:#1a1a1a;transform:scaleX(0.9443)">Papierfarbe simulieren</div>
<div class="t" style="left:1140.5px;top:217.7px;font-size:9.2px;color:#1a1a1a;transform:scaleX(0.9611)">Hintergrundfarbe für Seite festlegen</div>
<div class="t" style="left:1018.7px;top:241.8px;font-size:9.2px;color:#1a1a1a;transform:scaleX(0.9361)">Schwarze Druckfarbe simulieren</div>
<div class="t" style="left:1174.5px;top:241.9px;font-size:9.2px;color:#1a1a1a;transform:scaleX(0.9525)">Druckfarbenverwaltung</div>
<div class="t" style="left:1002.0px;top:270.8px;font-size:9.2px;color:#1a1a1a;transform:scaleX(0.9396)">Anzeigen</div>
<div class="t" style="left:1006.9px;top:294.5px;font-size:9.2px;color:#1a1a1a;transform:scaleX(0.9355)">Einblenden:</div>
<div class="t" style="left:1061.0px;top:294.2px;font-size:9.2px;color:#1a1a1a;transform:scaleX(0.9786)">Alle</div>
<div class="t" style="left:1233.8px;top:294.5px;font-size:9.2px;color:#1a1a1a;transform:scaleX(0.9360)">Deckkraft für Warnung:</div>
<div class="t" style="left:1332.6px;top:293.8px;font-size:9.2px;color:#1a1a1a;transform:scaleX(0.8212)">100</div>
<div class="t" style="left:1357.8px;top:294.5px;font-size:9.2px;color:#1a1a1a;transform:scaleX(0.7954)">%</div>
<div class="t" style="left:1018.7px;top:320.7px;font-size:9.2px;color:#1a1a1a;transform:scaleX(0.9579)">Objekt-, Endformat- und Anschnitt-Rahmen einblenden</div>
<div class="t" style="left:1264.4px;top:320.7px;font-size:9.2px;color:#1a1a1a;transform:scaleX(0.9439)">Seitenrahmen festlegen</div>
<div class="t" style="left:997.0px;top:352.9px;font-size:9.2px;color:#1a1a1a;transform:scaleX(0.8811)">Vorschau:</div>
<div class="t" style="left:1041.7px;top:352.6px;font-size:9.2px;color:#1a1a1a;transform:scaleX(0.9004)">Farbauszüge</div>
<div class="t" style="left:1002.0px;top:375.4px;font-size:9.2px;color:#1a1a1a;transform:scaleX(0.8855)">Farbauszüge</div>
<div class="t" style="left:1048.3px;top:398.8px;font-size:9.2px;color:#1a1a1a;transform:scaleX(0.9341)">Name</div>
<div class="t" style="left:1048.0px;top:413.7px;font-size:9.2px;color:#1a1a1a;transform:scaleX(0.9252)">CMYK-Farbplatten</div>
<div class="t" style="left:1048.0px;top:427.8px;font-size:9.2px;color:#1a1a1a;transform:scaleX(0.8741)">Prozess Cyan</div>
<div class="t" style="left:1048.0px;top:441.8px;font-size:9.2px;color:#1a1a1a;transform:scaleX(0.9133)">Prozess Magenta</div>
<div class="t" style="left:1048.0px;top:455.9px;font-size:9.2px;color:#1a1a1a;transform:scaleX(0.8884)">Prozess Gelb</div>
<div class="t" style="left:1048.0px;top:470.0px;font-size:9.2px;color:#1a1a1a;transform:scaleX(0.8833)">Prozess Schwarz</div>
<div class="t" style="left:1048.0px;top:484.1px;font-size:9.2px;color:#1a1a1a;transform:scaleX(0.9529)">Gesamtfarbauftrag</div>
<div class="t" style="left:1180.0px;top:427.8px;font-size:9.2px;color:#1a1a1a;transform:scaleX(0.8700)">76%</div>
<div class="t" style="left:1180.0px;top:441.8px;font-size:9.2px;color:#1a1a1a;transform:scaleX(0.8700)">71%</div>
<div class="t" style="left:1180.0px;top:455.9px;font-size:9.2px;color:#1a1a1a;transform:scaleX(0.8700)">69%</div>
<div class="t" style="left:1180.0px;top:470.0px;font-size:9.2px;color:#1a1a1a;transform:scaleX(0.8700)">82%</div>
<div class="t" style="left:1180.0px;top:484.1px;font-size:9.2px;color:#1a1a1a;transform:scaleX(0.8851)">298%</div>
<div class="t" style="left:1007.2px;top:594.6px;font-size:9.2px;color:#1a1a1a;transform:scaleX(0.9110)">Messgröße:</div>
<div class="t" style="left:1059.8px;top:593.3px;font-size:9.2px;color:#1a1a1a;transform:scaleX(0.9271)">Messpunkt</div>
<div class="t" style="left:1018.6px;top:619.1px;font-size:9.2px;color:#1a1a1a;transform:scaleX(0.9581)">Gesamtfarbauftrag</div>
<div class="t" style="left:1139.5px;top:618.5px;font-size:9.2px;color:#a0a0a0;transform:scaleX(0.9124)">280</div>
<div class="t" style="left:1183.0px;top:619.7px;font-size:9.2px;color:#1a1a1a;transform:scaleX(0.8566)">%</div>
<div class="t" style="left:1007.2px;top:641.6px;font-size:9.2px;color:#1a1a1a;transform:scaleX(0.9203)">Seite weist Transparenz auf:</div>
<div class="t" style="left:1120.0px;top:641.6px;font-size:9.2px;color:#1a1a1a;transform:scaleX(0.9362)">Nein</div>
<div class="t" style="left:1007.2px;top:659.1px;font-size:9.2px;color:#1a1a1a;transform:scaleX(0.9350)">Farbraum für Transparenz-Überblendung:</div>
<div class="t" style="left:1171.8px;top:659.1px;font-size:9.2px;color:#1a1a1a;transform:scaleX(0.9191)">Keine</div>
</div>
</div>
</body>
</html>
